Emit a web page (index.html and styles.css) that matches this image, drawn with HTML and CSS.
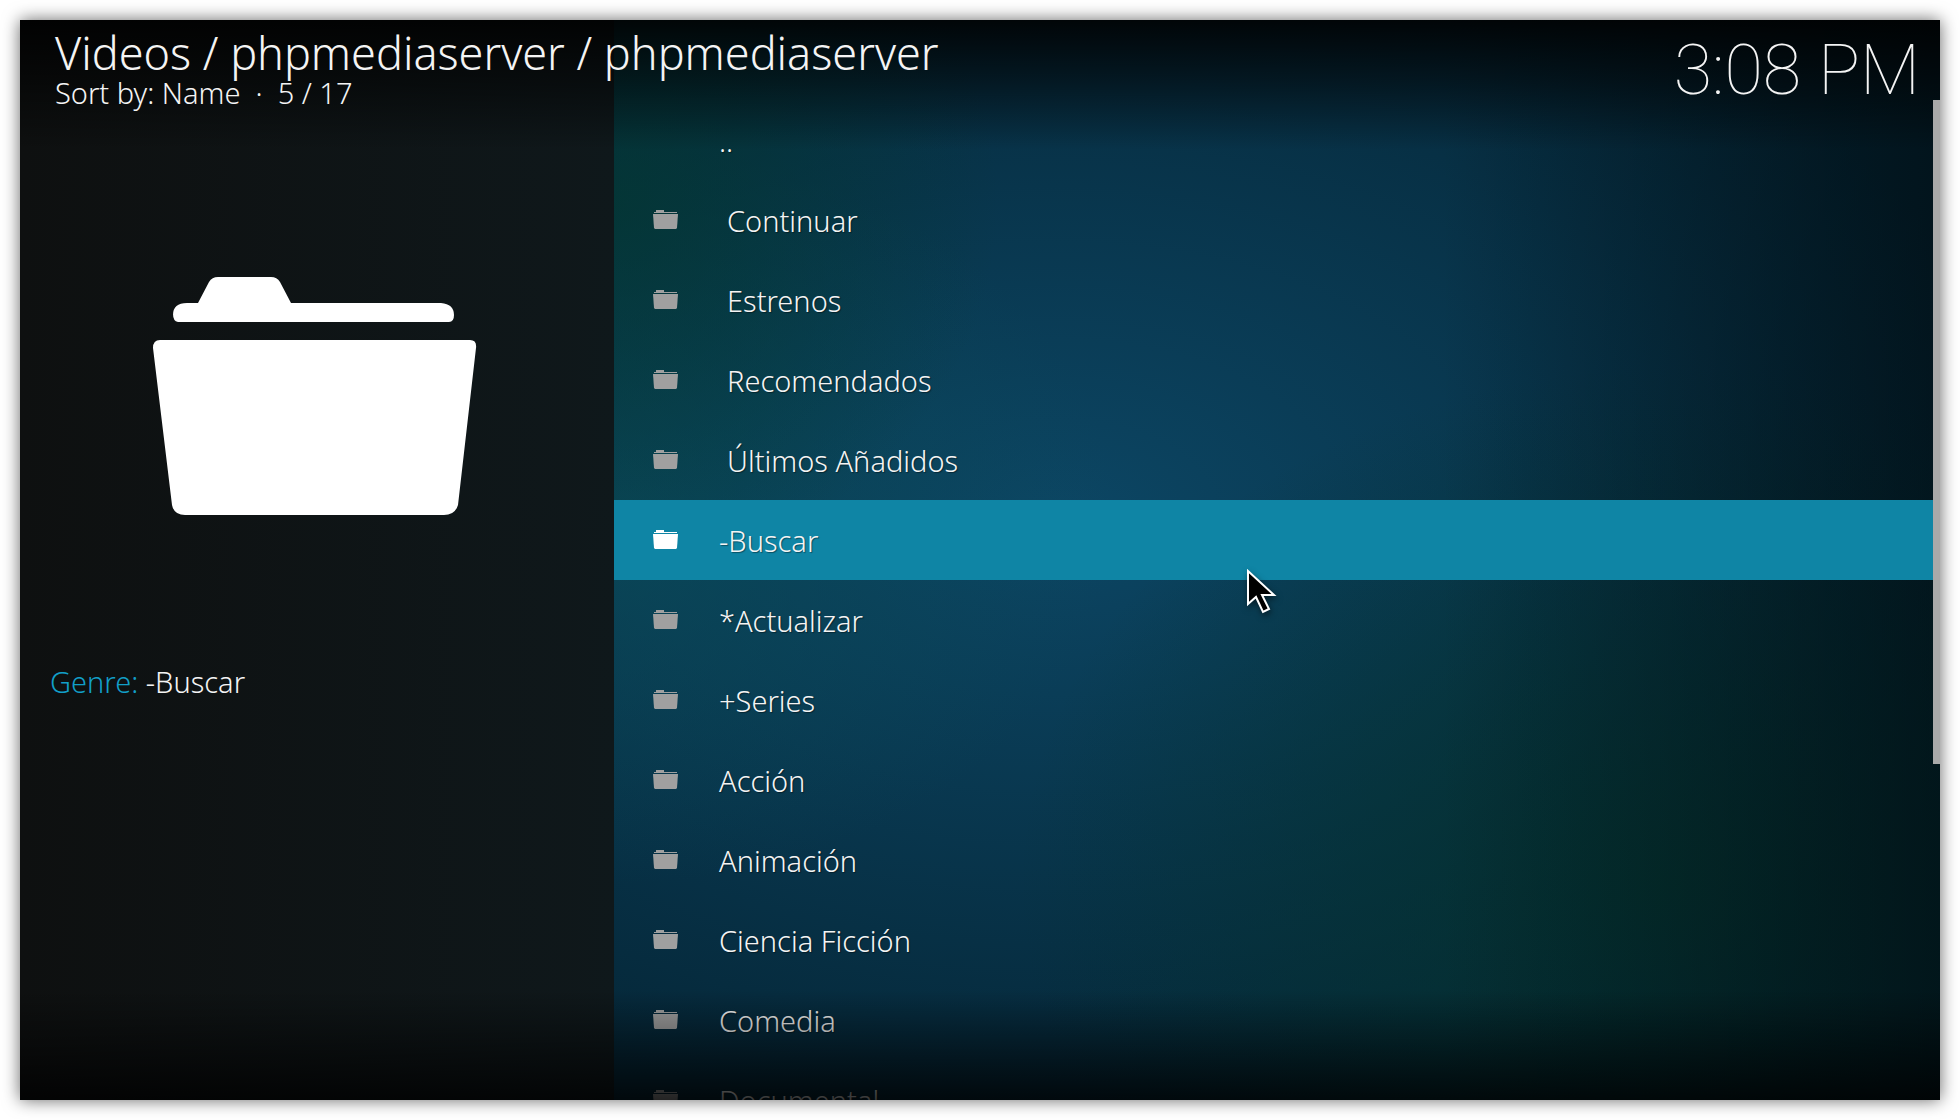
FILE: index.html
```html
<!DOCTYPE html>
<html lang="es">
<head>
    <meta charset="UTF-8">
    <meta name="viewport" content="width=device-width, initial-scale=1.0">
    <title>Videos / phpmediaserver</title>
    <link rel="stylesheet" href="styles.css">
</head>
<body>
    <!-- Folder shape shared by the artwork and the list -->
    <svg class="sprite" aria-hidden="true">
        <symbol id="folder-large" viewBox="0 0 324 238">
            <path d="M20 49V38Q20 26 34 26H45L56 5Q59 0 65 0H118Q124 0 127 5L138 26H288Q301 27 301 38Q301 45 296 45H25Q20 44 20 37Z"/>
            <path d="M7 63H317Q324 63 323 71L305 228Q302 238 291 238H32Q21 238 19 228L0 71Q0 63 7 63Z"/>
        </symbol>
        <symbol id="folder-small" viewBox="0 0 25 19">
            <path d="M1 2H3V0H11V2H24V3H1Z"/>
            <path d="M0 4H25L24 18L23 19H2L1 18Z"/>
        </symbol>
    </svg>

    <div class="screen">
        <aside class="sidebar">
            <svg class="artwork" role="img" aria-label="Folder"><use href="#folder-large"/></svg>
            <p class="info"><span class="info-label">Genre:</span> -Buscar</p>
        </aside>

        <header class="header">
            <div class="heading">
                <h1>Videos / phpmediaserver / phpmediaserver</h1>
                <p class="sort">Sort by: Name &nbsp;·&nbsp; 5 / 17</p>
            </div>
            <time class="clock" datetime="15:08">3:08 PM</time>
        </header>

        <main class="content">
            <nav class="list">
                <a class="item" href="#"><span class="icon"></span>..</a>
                <a class="item indent" href="#"><svg class="icon"><use href="#folder-small"/></svg>Continuar</a>
                <a class="item indent" href="#"><svg class="icon"><use href="#folder-small"/></svg>Estrenos</a>
                <a class="item indent" href="#"><svg class="icon"><use href="#folder-small"/></svg>Recomendados</a>
                <a class="item indent" href="#"><svg class="icon"><use href="#folder-small"/></svg>Últimos Añadidos</a>
                <a class="item selected" href="#" aria-current="true"><svg class="icon"><use href="#folder-small"/></svg>-Buscar</a>
                <a class="item" href="#"><svg class="icon"><use href="#folder-small"/></svg>*Actualizar</a>
                <a class="item" href="#"><svg class="icon"><use href="#folder-small"/></svg>+Series</a>
                <a class="item" href="#"><svg class="icon"><use href="#folder-small"/></svg>Acción</a>
                <a class="item" href="#"><svg class="icon"><use href="#folder-small"/></svg>Animación</a>
                <a class="item" href="#"><svg class="icon"><use href="#folder-small"/></svg>Ciencia Ficción</a>
                <a class="item" href="#"><svg class="icon"><use href="#folder-small"/></svg>Comedia</a>
                <a class="item" href="#"><svg class="icon"><use href="#folder-small"/></svg>Documental</a>
            </nav>
            <div class="scrollbar"><div class="thumb"></div></div>
        </main>

        <div class="fade"></div>

        <svg class="cursor" viewBox="0 0 30 46" aria-hidden="true">
            <path d="M1 2V35L9 28L16 43L22 40L15 26H27Z"/>
        </svg>
    </div>
</body>
</html>
```
FILE: styles.css
```css
* {
    box-sizing: border-box;
}
body {
    margin: 0;
    padding: 20px;
    height: 100vh;
    background: #fff;
    color: #f4f4f4;
    font-family: "Noto Sans", "Open Sans", sans-serif;
    font-size: 29px;
    font-weight: 340;
    line-height: 40px;
}
h1, p {
    margin: 0;
}
.sprite {
    display: none;
}

/* Window */
.screen {
    position: relative;
    display: grid;
    grid-template-columns: 594px minmax(0, 1fr);
    grid-template-rows: 80px minmax(0, 1fr);
    height: 100%;
    box-shadow: 0 0 16px rgba(0, 0, 0, 0.6);
    background:
        linear-gradient(to right, transparent 74%, rgba(0, 10, 14, 0.65) 100%),
        radial-gradient(ellipse 20% 34% at 31% 17%, rgba(3, 54, 50, 0.8), transparent),
        radial-gradient(ellipse 34% 48% at 86% 80%, rgba(4, 50, 47, 0.95), transparent),
        radial-gradient(ellipse 26% 34% at 31% 46%, rgba(10, 76, 90, 0.7), transparent),
        radial-gradient(ellipse 52% 56% at 54% 46%, #0c4664, #052738);
}
.fade {
    grid-area: 1 / 1 / 3 / 3;
    pointer-events: none;
    background: linear-gradient(to top, rgba(0, 0, 0, 0.78), transparent 110px);
}

/* Left panel */
.sidebar {
    grid-area: 1 / 1 / 3 / 2;
    display: flex;
    flex-direction: column;
    align-items: center;
    padding: 257px 34px 0 30px;
    background: linear-gradient(to right, #0e1010, #0f181b);
}
.artwork {
    flex: none;
    width: 324px;
    height: 238px;
    fill: #fff;
}
.info {
    align-self: stretch;
    margin-top: 147px;
}
.info-label {
    color: #129fc8;
}

/* Top bar */
.header {
    grid-area: 1 / 1 / 2 / 3;
    display: flex;
    justify-content: space-between;
    height: 130px;
    padding: 8px 20px 0 35px;
    background: linear-gradient(rgba(0, 0, 0, 0.88), rgba(0, 0, 0, 0.5) 60px, transparent);
}
h1 {
    font-size: 45px;
    font-weight: 300;
    line-height: 50px;
}
.sort {
    line-height: 30px;
}
.clock {
    font-family: Roboto, sans-serif;
    font-size: 70px;
    font-weight: 100;
    line-height: 84px;
}

/* Folder list */
.content {
    grid-area: 2 / 2 / 3 / 3;
    display: flex;
    overflow: hidden;
}
.list {
    flex: 1;
}
.item {
    display: flex;
    align-items: center;
    gap: 41px;
    height: 80px;
    padding: 2px 39px 0;
    color: inherit;
    text-decoration: none;
    text-shadow: 1px 1px 1px rgba(0, 0, 0, 0.4);
}
.indent {
    gap: 49px;
}
.selected {
    background: #0f85a5;
}
.icon {
    flex: none;
    width: 25px;
    height: 19px;
    margin-bottom: 4px;
    fill: #a0a0a0;
}
.selected .icon {
    fill: #fff;
}
.scrollbar {
    width: 7px;
}
.thumb {
    height: 66.4%;
    background: #a9a9a9;
}

/* Mouse pointer lies over the list */
.cursor {
    position: absolute;
    left: 1227px;
    top: 549px;
    width: 30px;
    height: 46px;
    fill: #000;
    stroke: #fff;
    stroke-width: 2;
    filter: drop-shadow(1px 3px 3px rgba(0, 0, 0, 0.5));
}
```
